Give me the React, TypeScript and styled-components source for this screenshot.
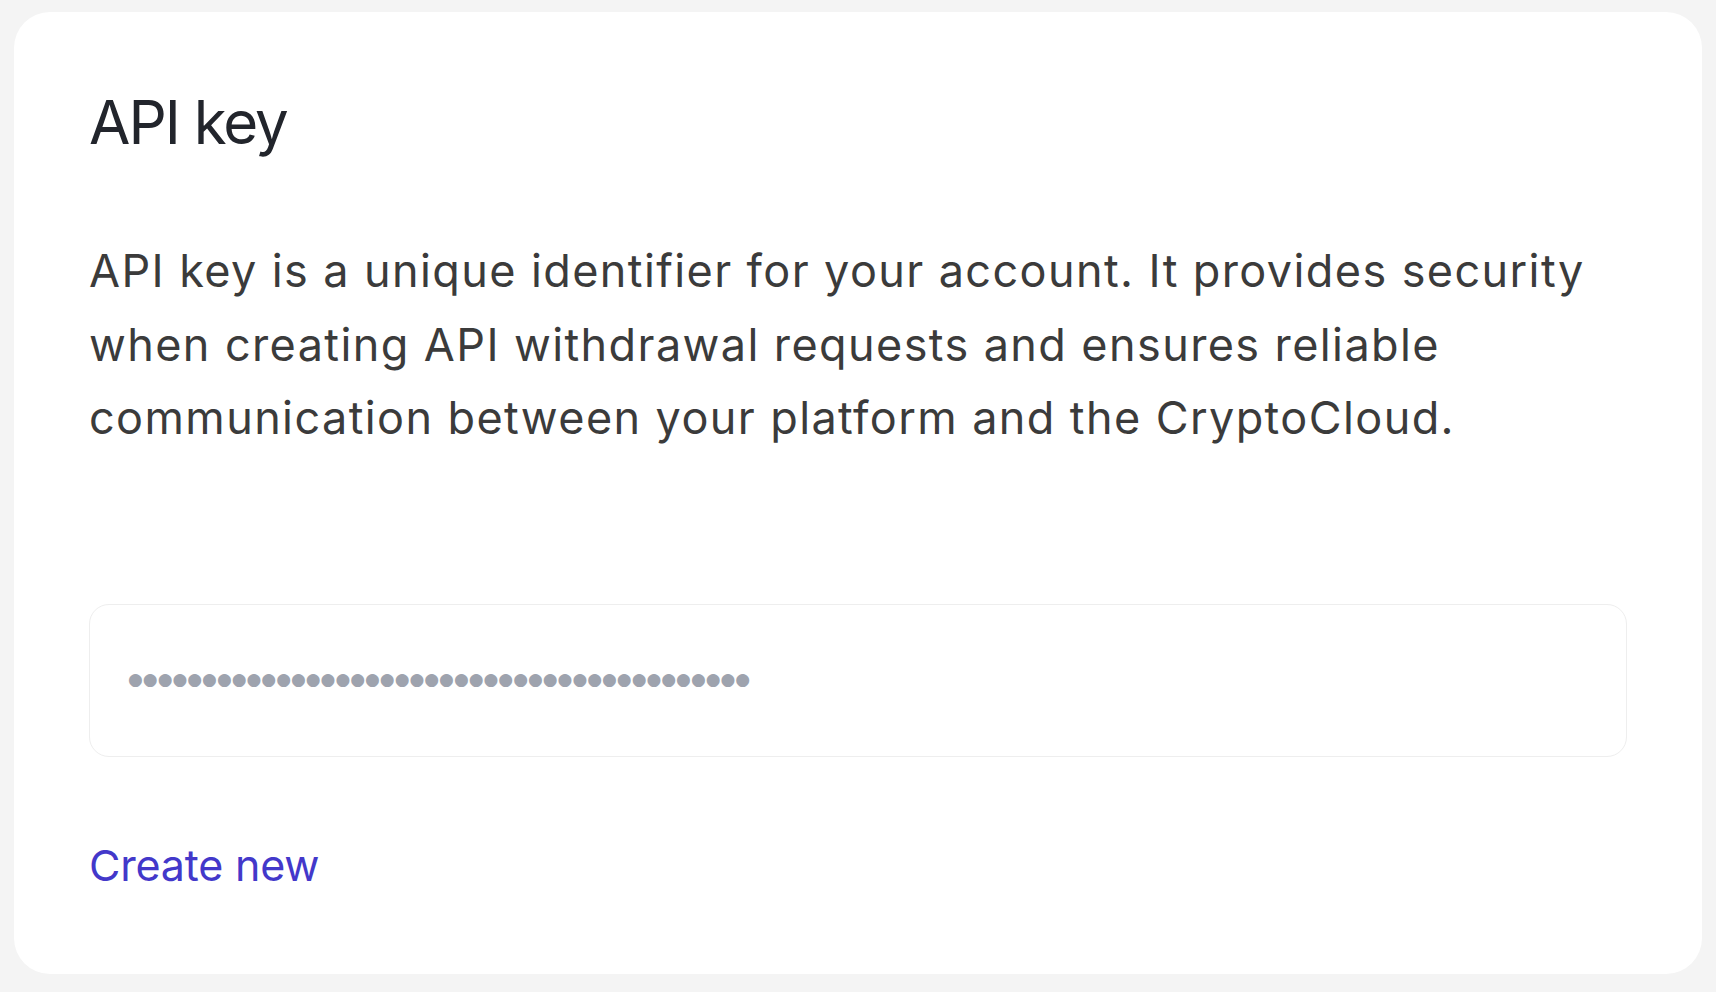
import React from "react";
import styled, { createGlobalStyle } from "styled-components";

const GlobalStyle = createGlobalStyle`
  html, body {
    margin: 0;
    padding: 0;
    background: #f4f4f4;
  }
  body {
    font-family: Inter, "Noto Sans", sans-serif;
  }
  * { box-sizing: border-box; }
`;

const Page = styled.div`
  padding: 12px 14px 17px 14px;
  min-height: 992px;
`;

const Card = styled.section`
  background: #ffffff;
  border-radius: 36px;
  padding: 74px 75px 83px 75px;
  display: flex;
  flex-direction: column;
`;

const Title = styled.h1`
  margin: 0;
  font-family: Inter, sans-serif;
  font-weight: 400;
  font-size: 60px;
  line-height: 72px;
  letter-spacing: -2px;
  color: #22252c;
`;

const Description = styled.p`
  margin: 76px 0 0 0;
  font-family: Inter, sans-serif;
  font-weight: 400;
  font-size: 45px;
  line-height: 73.5px;
  letter-spacing: 1.4px;
  color: #3b3b3b;
`;

const KeyField = styled.div`
  margin-top: 149px;
  height: 153px;
  border: 1.5px solid #eeeeee;
  border-radius: 20px;
  display: flex;
  align-items: center;
  padding: 0 38px 3px 38px;
`;

const MaskedKey = styled.span`
  font-family: "DejaVu Sans", sans-serif;
  font-size: 17px;
  letter-spacing: -0.02px;
  color: #9ea3ae;
  white-space: nowrap;
`;

const CreateLink = styled.a`
  margin-top: 82px;
  align-self: flex-start;
  font-family: Inter, sans-serif;
  font-size: 43px;
  line-height: 52px;
  letter-spacing: -0.2px;
  color: #4338ca;
  text-decoration: none;
  cursor: pointer;
`;

export default function App() {
  const dots = "●".repeat(42);
  return (
    <>
      <GlobalStyle />
      <Page>
        <Card>
          <Title>API key</Title>
          <Description>
            API key is a unique identifier for your account. It provides security
            <br />
            when creating API withdrawal requests and ensures reliable
            <br />
            communication between your platform and the CryptoCloud.
          </Description>
          <KeyField>
            <MaskedKey>{dots}</MaskedKey>
          </KeyField>
          <CreateLink>Create new</CreateLink>
        </Card>
      </Page>
    </>
  );
}
